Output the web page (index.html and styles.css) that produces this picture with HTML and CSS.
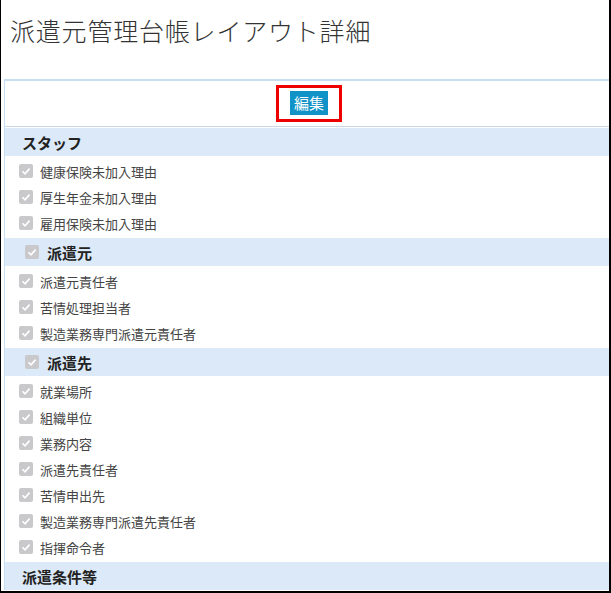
FILE: index.html
```html
<!DOCTYPE html>
<html lang="ja">
<head>
<meta charset="utf-8">
<link rel="stylesheet" href="styles.css">
</head>
<body>
<div class="frame">
  <h1 class="title">派遣元管理台帳レイアウト詳細</h1>
  <div class="panel">
    <div class="panel-head">
      <span class="highlight"><button class="btn">編集</button></span>
    </div>
    <div class="section-head">スタッフ</div>
    <ul class="items">
      <li><span class="cb"><svg viewBox="0 0 14 14"><path d="M3.5 7.3 L6 9.8 L10.6 4.6"/></svg></span>健康保険未加入理由</li>
      <li><span class="cb"><svg viewBox="0 0 14 14"><path d="M3.5 7.3 L6 9.8 L10.6 4.6"/></svg></span>厚生年金未加入理由</li>
      <li><span class="cb"><svg viewBox="0 0 14 14"><path d="M3.5 7.3 L6 9.8 L10.6 4.6"/></svg></span>雇用保険未加入理由</li>
    </ul>
    <div class="section-head with-cb"><span class="cb"><svg viewBox="0 0 14 14"><path d="M3.5 7.3 L6 9.8 L10.6 4.6"/></svg></span>派遣元</div>
    <ul class="items">
      <li><span class="cb"><svg viewBox="0 0 14 14"><path d="M3.5 7.3 L6 9.8 L10.6 4.6"/></svg></span>派遣元責任者</li>
      <li><span class="cb"><svg viewBox="0 0 14 14"><path d="M3.5 7.3 L6 9.8 L10.6 4.6"/></svg></span>苦情処理担当者</li>
      <li><span class="cb"><svg viewBox="0 0 14 14"><path d="M3.5 7.3 L6 9.8 L10.6 4.6"/></svg></span>製造業務専門派遣元責任者</li>
    </ul>
    <div class="section-head with-cb"><span class="cb"><svg viewBox="0 0 14 14"><path d="M3.5 7.3 L6 9.8 L10.6 4.6"/></svg></span>派遣先</div>
    <ul class="items">
      <li><span class="cb"><svg viewBox="0 0 14 14"><path d="M3.5 7.3 L6 9.8 L10.6 4.6"/></svg></span>就業場所</li>
      <li><span class="cb"><svg viewBox="0 0 14 14"><path d="M3.5 7.3 L6 9.8 L10.6 4.6"/></svg></span>組織単位</li>
      <li><span class="cb"><svg viewBox="0 0 14 14"><path d="M3.5 7.3 L6 9.8 L10.6 4.6"/></svg></span>業務内容</li>
      <li><span class="cb"><svg viewBox="0 0 14 14"><path d="M3.5 7.3 L6 9.8 L10.6 4.6"/></svg></span>派遣先責任者</li>
      <li><span class="cb"><svg viewBox="0 0 14 14"><path d="M3.5 7.3 L6 9.8 L10.6 4.6"/></svg></span>苦情申出先</li>
      <li><span class="cb"><svg viewBox="0 0 14 14"><path d="M3.5 7.3 L6 9.8 L10.6 4.6"/></svg></span>製造業務専門派遣先責任者</li>
      <li><span class="cb"><svg viewBox="0 0 14 14"><path d="M3.5 7.3 L6 9.8 L10.6 4.6"/></svg></span>指揮命令者</li>
    </ul>
    <div class="section-head">派遣条件等</div>
  </div>
</div>
</body>
</html>
```

FILE: styles.css
```css
* { box-sizing: border-box; }
html, body { margin: 0; padding: 0; background: #fff; }
body {
  font-family: "Noto Sans CJK JP", "Noto Sans", sans-serif;
  color: #333;
}
.frame {
  width: 611px;
  height: 593px;
  border-left: 1px solid #000;
  border-right: 2px solid #000;
  border-bottom: 2px solid #000;
  overflow: hidden;
  padding-left: 3px;
}
.title {
  margin: 0;
  padding: 14px 0 0 6px;
  height: 79px;
  font-size: 25px;
  font-weight: 300;
  line-height: 32px;
  color: #333;
  letter-spacing: 0.8px;
}
.panel {
  width: 609px;
  border-top: 2px solid #c6ddf2;
  border-left: 1px solid #c6ddf2;
}
.panel-head {
  height: 46px;
  border-bottom: 1px solid #c9d7e4;
  margin-bottom: 1px;
  display: flex;
  align-items: center;
  justify-content: center;
}
.highlight {
  display: inline-flex;
  border: 3px solid #ee0000;
  padding: 3px 11px 4px 11px;
}
.btn {
  font-family: inherit;
  font-size: 15px;
  line-height: 24px;
  height: 24px;
  padding: 0 4px;
  border: 0;
  background: #1193c8;
  color: #fff;
}
.section-head {
  height: 28px;
  background: #dbe9f8;
  display: flex;
  align-items: center;
  padding-left: 17px;
  font-size: 15px;
  font-weight: 700;
  color: #222;
}
.section-head.with-cb { padding-left: 20px; }
.section-head.with-cb .cb { margin-right: 8px; }
.items {
  list-style: none;
  margin: 0;
  padding: 2px 0;
}
.items li {
  height: 26px;
  display: flex;
  align-items: center;
  padding-left: 14px;
  font-size: 13px;
  color: #444;
}
.items li .cb { margin-right: 7px; }
.cb {
  width: 14px;
  height: 14px;
  border-radius: 2px;
  background: #c9c9cc;
  display: inline-block;
  flex: none;
}
.cb svg { display: block; width: 14px; height: 14px; }
.cb path { fill: none; stroke: #fff; stroke-width: 1.6; }
```
